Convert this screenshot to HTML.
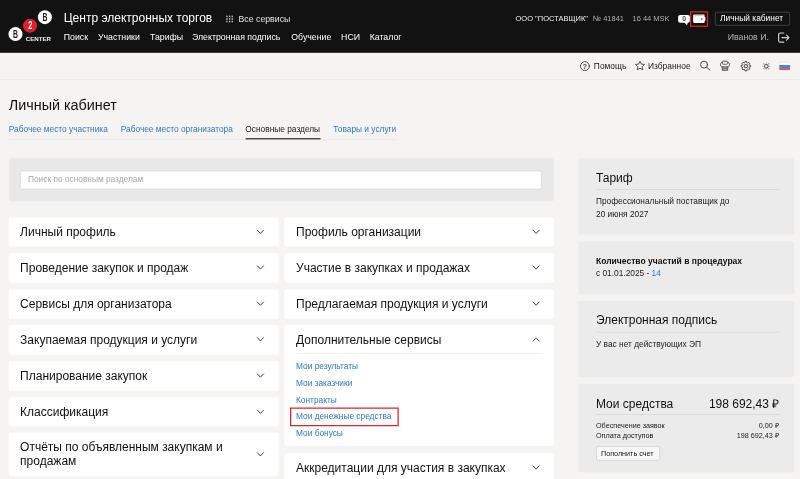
<!DOCTYPE html>
<html lang="ru">
<head>
<meta charset="utf-8">
<title>Личный кабинет</title>
<style>
*{box-sizing:border-box;margin:0;padding:0}
html,body{width:800px;height:479px;overflow:hidden;background:#f5f4f2}
body{font-family:"Liberation Sans",sans-serif;color:#1a1a1a}
#pg{position:absolute;left:-20px;top:-20px;width:1344px;height:840px;transform:scale(0.625);transform-origin:0 0;filter:blur(0.4px);background:#f5f4f2;overflow:hidden}
#in{position:absolute;left:32px;top:32px;width:1280px;height:767px}
.t{position:absolute;white-space:nowrap;line-height:20px}
.r{position:absolute}
svg{position:absolute;overflow:visible}
</style>
</head>
<body>
<div id="pg"><div id="in">
<div class="r" style="left:-30.00px;top:-30.00px;width:1340.00px;height:114.00px;background:#121212;border-bottom:1.5px solid #000;"></div>
<svg style="left:0;top:0" width="100" height="84" viewBox="0 0 100 84">
<circle cx="71.8" cy="27.4" r="11.2" fill="#fff"/>
<circle cx="48.1" cy="41.3" r="11.2" fill="#e21e2d"/>
<circle cx="24.8" cy="54.6" r="11.2" fill="#fff"/>
<text transform="translate(71.8 33.1) scale(0.64 1)" font-family="Liberation Sans" font-weight="bold" font-size="17" text-anchor="middle" fill="#1a1a1a">B</text>
<text transform="translate(48.3 47) scale(0.7 1)" font-family="Liberation Sans" font-weight="bold" font-size="16.600" text-anchor="middle" fill="#fff">2</text>
<text transform="translate(24.8 60.3) scale(0.64 1)" font-family="Liberation Sans" font-weight="bold" font-size="17" text-anchor="middle" fill="#1a1a1a">B</text>
<text x="41.2" y="64.8" font-family="Liberation Sans" font-weight="bold" font-size="9.4" fill="#f2f2f2" textLength="40.4" lengthAdjust="spacingAndGlyphs">CENTER</text>
</svg>
<div class="t" style="top:19.35px;font-size:19.2px;color:#fff;left:102.00px;">Центр электронных торгов</div>
<svg style="left:362.2px;top:24.6px" width="11" height="11" viewBox="0 0 11 11"><rect x="0.00" y="0.00" width="2.2" height="2.600" fill="#b8b8b8"/><rect x="4.25" y="0.00" width="2.2" height="2.600" fill="#b8b8b8"/><rect x="8.50" y="0.00" width="2.2" height="2.600" fill="#b8b8b8"/><rect x="0.00" y="4.10" width="2.2" height="2.600" fill="#b8b8b8"/><rect x="4.25" y="4.10" width="2.2" height="2.600" fill="#b8b8b8"/><rect x="8.50" y="4.10" width="2.2" height="2.600" fill="#b8b8b8"/><rect x="0.00" y="8.20" width="2.2" height="2.600" fill="#b8b8b8"/><rect x="4.25" y="8.20" width="2.2" height="2.600" fill="#b8b8b8"/><rect x="8.50" y="8.20" width="2.2" height="2.600" fill="#b8b8b8"/></svg>
<div class="t" style="top:20.35px;font-size:14px;color:#e4e4e4;left:381.60px;">Все сервисы</div>
<div class="t" style="top:48.75px;font-size:14px;color:#fff;left:102.00px;">Поиск</div>
<div class="t" style="top:48.75px;font-size:14px;color:#fff;left:156.80px;">Участники</div>
<div class="t" style="top:48.75px;font-size:14px;color:#fff;left:240.00px;">Тарифы</div>
<div class="t" style="top:48.75px;font-size:14px;color:#fff;left:307.20px;">Электронная подпись</div>
<div class="t" style="top:48.75px;font-size:14px;color:#fff;left:466.00px;">Обучение</div>
<div class="t" style="top:48.75px;font-size:14px;color:#fff;left:545.80px;">НСИ</div>
<div class="t" style="top:48.75px;font-size:14px;color:#fff;left:591.50px;">Каталог</div>
<div class="t" style="top:19.84px;font-size:12px;color:#f0f0f0;left:824.80px;">ООО "ПОСТАВЩИК"</div>
<div class="t" style="top:19.84px;font-size:12px;color:#b0b0b0;left:948.80px;">№ 41841</div>
<div class="t" style="top:19.84px;font-size:12px;color:#b0b0b0;left:1012.00px;">16 44 MSK</div>
<svg style="left:1085.2px;top:23.6px" width="20" height="17" viewBox="0 0 20 17">
<path d="M3.200 0H15.600a3.200 3.200 0 0 1 3.200 3.200V9.200a3.200 3.200 0 0 1-3.200 3.200H15.300L14.200 16.400L10.200 12.400H3.200a3.200 3.200 0 0 1-3.200-3.200V3.200a3.200 3.200 0 0 1 3.200-3.200z" fill="#fff"/>
<text x="9.600" y="10.100" font-family="Liberation Sans" font-weight="bold" font-size="11" text-anchor="middle" fill="#4a4a4a">0</text>
</svg>
<div class="r" style="left:1104.4px;top:17.6px;width:28.8px;height:25.2px;border:2.4px solid #e0212f"></div>
<svg style="left:1108.8px;top:23.2px" width="20" height="14" viewBox="0 0 20 14">
<path d="M1.800 0H16.800a1.600 1.600 0 0 1 1.600 1.600V4.200H19.600V10H18.400V12a1.600 1.600 0 0 1-1.600 1.600H1.800a1.800 1.800 0 0 1-1.800-1.800V1.800a1.800 1.800 0 0 1 1.800-1.800z" fill="#fff"/>
<path d="M1.600 1.800H16.600" stroke="#999" stroke-width="0.800"/>
<circle cx="14" cy="7.300" r="1.300" fill="#222"/>
</svg>
<div class="r" style="left:1143.5px;top:19.2px;width:120.3px;height:22.1px;border:1.2px solid #5c5c5c;border-radius:3px"></div>
<div class="t" style="top:20.14px;font-size:13.44px;color:#fff;left:1152.00px;">Личный кабинет</div>
<div class="t" style="top:49.35px;font-size:14px;color:#b4b4b4;left:1164.30px;">Иванов И.</div>
<svg style="left:1244.8px;top:52.200px" width="19" height="17" viewBox="0 0 19 17" fill="none" stroke="#d2d2d2" stroke-width="1.800" stroke-linecap="round" stroke-linejoin="round">
<path d="M9 0.800H3.600A2.800 2.800 0 0 0 0.800 3.600V12.600A2.800 2.800 0 0 0 3.600 15.400H9"/>
<path d="M6 8.100H17.400M13.400 4.100L17.400 8.100L13.400 12.100"/>
</svg>
<div class="r" style="left:-30.00px;top:127.00px;width:1340.00px;height:1.00px;background:#e6e5e3;"></div>
<svg style="left:928.2px;top:98.2px" width="16" height="16" viewBox="0 0 16 16" fill="none" stroke="#3a3a3a" stroke-width="1.400" stroke-linecap="round">
<circle cx="7.800" cy="7.800" r="7.100"/>
<text x="7.800" y="11.700" font-family="Liberation Sans" font-weight="bold" font-size="11" text-anchor="middle" fill="#3a3a3a" stroke="none">?</text>
</svg>
<div class="t" style="top:96.74px;font-size:13.44px;color:#1a1a1a;left:950.20px;">Помощь</div>
<svg style="left:1016.2px;top:97px" width="16" height="16" viewBox="0 0 16 16" fill="none" stroke="#3a3a3a" stroke-width="1.400" stroke-linejoin="round">
<path d="M8 0.900L10.200 5.500L15.200 6.100L11.500 9.600L12.500 14.600L8 12.100L3.500 14.600L4.500 9.600L0.800 6.100L5.800 5.500Z"/>
</svg>
<div class="t" style="top:96.74px;font-size:13.44px;color:#1a1a1a;left:1036.80px;">Избранное</div>
<svg style="left:1119.6px;top:97.400px" width="17" height="17" viewBox="0 0 17 17" fill="none" stroke="#3a3a3a" stroke-width="1.500" stroke-linecap="round">
<circle cx="6.500" cy="6.400" r="5.600"/><path d="M10.700 10.600L15.900 15.200"/>
</svg>
<svg style="left:1152px;top:97.400px" width="17" height="17" viewBox="0 0 17 17" fill="none" stroke="#3a3a3a" stroke-width="1.400" stroke-linejoin="round">
<path d="M3.200 9.800C1.600 9.800 0.800 8.400 0.800 6.400C0.800 4 2 2.900 3.900 2.800V2.300C3.900 1.200 4.700 0.800 5.600 0.800H10.400C11.300 0.800 12.100 1.200 12.100 2.300V2.800C14 2.900 15.200 4 15.200 6.400C15.200 8.400 14.400 9.800 12.800 9.800Z"/>
<path d="M3.900 2.800V4.600C3.900 5.400 4.400 5.800 5.200 5.800H10.800C11.600 5.800 12.100 5.400 12.100 4.600V2.800" stroke-width="1.200"/>
<path d="M3.600 9.800V15.500H12.400V9.800" stroke-width="1.300"/>
<path d="M3.600 12.600H12.400M5.800 10.200V15.500M8 10.200V15.500M10.200 10.200V15.500" stroke-width="1" stroke="#555"/>
</svg>
<svg style="left:1184.8px;top:97.800px" width="17" height="16" viewBox="0 0 17 16" fill="none" stroke="#3a3a3a" stroke-width="1.400" stroke-linejoin="round">
<path d="M7.00 0.21L9.60 0.21L9.71 2.28L11.21 2.90L12.75 1.51L14.59 3.35L13.20 4.89L13.82 6.39L15.89 6.50L15.89 9.10L13.82 9.21L13.20 10.71L14.59 12.25L12.75 14.09L11.21 12.70L9.71 13.32L9.60 15.39L7.00 15.39L6.89 13.32L5.39 12.70L3.85 14.09L2.01 12.25L3.40 10.71L2.78 9.21L0.71 9.10L0.71 6.50L2.78 6.39L3.40 4.89L2.01 3.35L3.85 1.51L5.39 2.90L6.89 2.28Z"/>
<circle cx="8.3" cy="7.8" r="2.700" stroke-width="1.600"/>
</svg>
<svg style="left:1219.5px;top:99.500px" width="13" height="13" viewBox="0 0 13 13" fill="none">
<circle cx="6.100" cy="6.100" r="2.900" stroke="#555" stroke-width="1.700"/><path d="M10.70 6.10L12.10 6.10M6.10 10.70L6.10 12.10M1.50 6.10L0.10 6.10M6.10 1.50L6.10 0.10" stroke="#a9a9a9" stroke-width="2"/><circle cx="10.06" cy="10.06" r="0.95" fill="#666" stroke="none"/><circle cx="2.14" cy="10.06" r="0.95" fill="#666" stroke="none"/><circle cx="2.14" cy="2.14" r="0.95" fill="#666" stroke="none"/><circle cx="10.06" cy="2.14" r="0.95" fill="#666" stroke="none"/>
</svg>
<div class="r" style="left:1246.5px;top:100.4px;width:17.5px;height:11.3px;border-radius:1px;overflow:hidden;box-shadow:0 0 1.5px rgba(0,0,0,.18);background:linear-gradient(#fff 0 31%,#3d89e6 31% 67%,#f24e58 67% 100%)"></div>
<div class="t" style="top:158.03px;font-size:23px;color:#111;left:14.00px;">Личный кабинет</div>
<div class="t" style="top:197.48px;font-size:13.33px;color:#2e7bbe;left:14.00px;">Рабочее место участника</div>
<div class="t" style="top:197.48px;font-size:13.33px;color:#2e7bbe;left:193.20px;">Рабочее место организатора</div>
<div class="t" style="top:197.48px;font-size:13.33px;color:#1a1a1a;left:392.60px;">Основные разделы</div>
<div class="t" style="top:197.48px;font-size:13.33px;color:#2e7bbe;left:533.40px;">Товары и услуги</div>
<div class="r" style="left:14.00px;top:222.60px;width:619.30px;height:1.00px;background:#e4e3e1;"></div>
<div class="r" style="left:392.60px;top:221.00px;width:120.40px;height:2.40px;background:#333;"></div>
<div class="r" style="left:14.00px;top:253.20px;width:872.20px;height:68.80px;background:#e8e8e8;border-radius:4px;"></div>
<div class="r" style="left:32px;top:272.8px;width:834.8px;height:30.4px;background:#fff;border:1px solid #cfcfcf;border-radius:3px"></div>
<div class="t" style="top:277.38px;font-size:13.33px;color:#a8a8a8;left:44.80px;">Поиск по основным разделам</div>
<div class="r" style="left:14.00px;top:347.60px;width:431.60px;height:46.80px;background:#fff;border-radius:4px;"></div>
<div class="t" style="top:361.25px;font-size:19.2px;color:#111;left:32.20px;">Личный профиль</div>
<svg style="left:410.90px;top:366.60px" width="12" height="8" viewBox="0 0 12 8" fill="none" stroke="#383838" stroke-width="1.500" stroke-linecap="round" stroke-linejoin="round"><path d="M0.8 1.300L5.700 6.500L10.600 1.300"/></svg>
<div class="r" style="left:14.00px;top:405.20px;width:431.60px;height:46.80px;background:#fff;border-radius:4px;"></div>
<div class="t" style="top:418.85px;font-size:19.2px;color:#111;left:32.20px;">Проведение закупок и продаж</div>
<svg style="left:410.90px;top:424.20px" width="12" height="8" viewBox="0 0 12 8" fill="none" stroke="#383838" stroke-width="1.500" stroke-linecap="round" stroke-linejoin="round"><path d="M0.8 1.300L5.700 6.500L10.600 1.300"/></svg>
<div class="r" style="left:14.00px;top:462.80px;width:431.60px;height:46.80px;background:#fff;border-radius:4px;"></div>
<div class="t" style="top:476.45px;font-size:19.2px;color:#111;left:32.20px;">Сервисы для организатора</div>
<svg style="left:410.90px;top:481.80px" width="12" height="8" viewBox="0 0 12 8" fill="none" stroke="#383838" stroke-width="1.500" stroke-linecap="round" stroke-linejoin="round"><path d="M0.8 1.300L5.700 6.500L10.600 1.300"/></svg>
<div class="r" style="left:14.00px;top:520.40px;width:431.60px;height:46.80px;background:#fff;border-radius:4px;"></div>
<div class="t" style="top:534.05px;font-size:19.2px;color:#111;left:32.20px;">Закупаемая продукция и услуги</div>
<svg style="left:410.90px;top:539.40px" width="12" height="8" viewBox="0 0 12 8" fill="none" stroke="#383838" stroke-width="1.500" stroke-linecap="round" stroke-linejoin="round"><path d="M0.8 1.300L5.700 6.500L10.600 1.300"/></svg>
<div class="r" style="left:14.00px;top:578.00px;width:431.60px;height:46.80px;background:#fff;border-radius:4px;"></div>
<div class="t" style="top:591.65px;font-size:19.2px;color:#111;left:32.20px;">Планирование закупок</div>
<svg style="left:410.90px;top:597.00px" width="12" height="8" viewBox="0 0 12 8" fill="none" stroke="#383838" stroke-width="1.500" stroke-linecap="round" stroke-linejoin="round"><path d="M0.8 1.300L5.700 6.500L10.600 1.300"/></svg>
<div class="r" style="left:14.00px;top:635.60px;width:431.60px;height:46.80px;background:#fff;border-radius:4px;"></div>
<div class="t" style="top:649.25px;font-size:19.2px;color:#111;left:32.20px;">Классификация</div>
<svg style="left:410.90px;top:654.60px" width="12" height="8" viewBox="0 0 12 8" fill="none" stroke="#383838" stroke-width="1.500" stroke-linecap="round" stroke-linejoin="round"><path d="M0.8 1.300L5.700 6.500L10.600 1.300"/></svg>
<div class="r" style="left:14.00px;top:692.40px;width:431.60px;height:69.20px;background:#fff;border-radius:4px;"></div>
<div class="t" style="top:706.05px;font-size:19.2px;color:#111;left:32.20px;">Отчёты по объявленным закупкам и</div>
<div class="t" style="top:728.15px;font-size:19.2px;color:#111;left:32.20px;">продажам</div>
<svg style="left:410.90px;top:722.80px" width="12" height="8" viewBox="0 0 12 8" fill="none" stroke="#383838" stroke-width="1.500" stroke-linecap="round" stroke-linejoin="round"><path d="M0.8 1.300L5.700 6.500L10.600 1.300"/></svg>
<div class="r" style="left:454.70px;top:347.60px;width:431.50px;height:46.80px;background:#fff;border-radius:4px;"></div>
<div class="t" style="top:361.25px;font-size:19.2px;color:#111;left:473.70px;">Профиль организации</div>
<svg style="left:851.50px;top:366.60px" width="12" height="8" viewBox="0 0 12 8" fill="none" stroke="#383838" stroke-width="1.500" stroke-linecap="round" stroke-linejoin="round"><path d="M0.8 1.300L5.700 6.500L10.600 1.300"/></svg>
<div class="r" style="left:454.70px;top:405.20px;width:431.50px;height:46.80px;background:#fff;border-radius:4px;"></div>
<div class="t" style="top:418.85px;font-size:19.2px;color:#111;left:473.70px;">Участие в закупках и продажах</div>
<svg style="left:851.50px;top:424.20px" width="12" height="8" viewBox="0 0 12 8" fill="none" stroke="#383838" stroke-width="1.500" stroke-linecap="round" stroke-linejoin="round"><path d="M0.8 1.300L5.700 6.500L10.600 1.300"/></svg>
<div class="r" style="left:454.70px;top:462.80px;width:431.50px;height:46.80px;background:#fff;border-radius:4px;"></div>
<div class="t" style="top:476.45px;font-size:19.2px;color:#111;left:473.70px;">Предлагаемая продукция и услуги</div>
<svg style="left:851.50px;top:481.80px" width="12" height="8" viewBox="0 0 12 8" fill="none" stroke="#383838" stroke-width="1.500" stroke-linecap="round" stroke-linejoin="round"><path d="M0.8 1.300L5.700 6.500L10.600 1.300"/></svg>
<div class="r" style="left:454.70px;top:520.40px;width:431.50px;height:192.60px;background:#fff;border-radius:4px;"></div>
<div class="t" style="top:533.55px;font-size:19.2px;color:#111;left:473.70px;">Дополнительные сервисы</div>
<svg style="left:851.50px;top:539.40px" width="12" height="8" viewBox="0 0 12 8" fill="none" stroke="#383838" stroke-width="1.500" stroke-linecap="round" stroke-linejoin="round"><path d="M0.8 6.700L5.700 1.500L10.600 6.700"/></svg>
<div class="r" style="left:473.60px;top:564.90px;width:393.30px;height:1.00px;background:#ebebeb;"></div>
<div class="t" style="top:577.28px;font-size:13.33px;color:#2e7bbe;left:473.60px;">Мои результаты</div>
<div class="t" style="top:603.98px;font-size:13.33px;color:#2e7bbe;left:473.60px;">Мои заказчики</div>
<div class="t" style="top:630.68px;font-size:13.33px;color:#2e7bbe;left:473.60px;">Контракты</div>
<div class="t" style="top:657.38px;font-size:13.33px;color:#2e7bbe;left:473.60px;">Мои денежные средства</div>
<div class="t" style="top:684.08px;font-size:13.33px;color:#2e7bbe;left:473.60px;">Мои бонусы</div>
<div class="r" style="left:464.2px;top:652.2px;width:173.8px;height:29.8px;border:2.3px solid #e0222f"></div>
<div class="r" style="left:454.70px;top:725.40px;width:431.50px;height:46.80px;background:#fff;border-radius:4px;"></div>
<div class="t" style="top:738.55px;font-size:19.2px;color:#111;left:473.70px;">Аккредитации для участия в закупках</div>
<svg style="left:851.50px;top:744.40px" width="12" height="8" viewBox="0 0 12 8" fill="none" stroke="#383838" stroke-width="1.500" stroke-linecap="round" stroke-linejoin="round"><path d="M0.8 1.300L5.700 6.500L10.600 1.300"/></svg>
<div class="r" style="left:925.30px;top:253.40px;width:345.30px;height:121.60px;background:#ebebeb;border-radius:4px;"></div>
<div class="t" style="top:274.55px;font-size:19.2px;color:#111;left:953.60px;">Тариф</div>
<div class="r" style="left:953.60px;top:302.80px;width:293.00px;height:1.00px;background:#d3d3d3;"></div>
<div class="t" style="top:312.58px;font-size:13.33px;color:#1c1c1c;left:953.60px;">Профессиональный поставщик до</div>
<div class="t" style="top:332.78px;font-size:13.33px;color:#1c1c1c;left:953.60px;">20 июня 2027</div>
<div class="r" style="left:925.30px;top:386.40px;width:345.30px;height:84.30px;background:#ebebeb;border-radius:4px;"></div>
<div class="t" style="top:408.78px;font-size:13.63px;color:#111;left:953.60px;font-weight:bold;">Количество участий в процедурах</div>
<div class="t" style="top:427.98px;font-size:13.33px;color:#1c1c1c;left:953.60px;">с 01.01.2025 - <span style="color:#2e7bbe">14</span></div>
<div class="r" style="left:925.30px;top:481.10px;width:345.30px;height:122.40px;background:#ebebeb;border-radius:4px;"></div>
<div class="t" style="top:502.85px;font-size:19.2px;color:#111;left:953.60px;">Электронная подпись</div>
<div class="r" style="left:953.60px;top:531.00px;width:293.00px;height:1.00px;background:#d3d3d3;"></div>
<div class="t" style="top:541.48px;font-size:13.33px;color:#1c1c1c;left:953.60px;">У вас нет действующих ЭП</div>
<div class="r" style="left:925.30px;top:613.60px;width:345.30px;height:142.60px;background:#ebebeb;border-radius:4px;"></div>
<div class="t" style="top:636.15px;font-size:19.2px;color:#111;left:953.60px;">Мои средства</div>
<div class="t" style="top:636.15px;font-size:19.2px;color:#111;right:33.40px;">198 692,43 ₽</div>
<div class="r" style="left:953.60px;top:663.00px;width:293.00px;height:1.00px;background:#d3d3d3;"></div>
<div class="t" style="top:670.31px;font-size:11.52px;color:#1a1a1a;left:953.60px;">Обеспечение заявок</div>
<div class="t" style="top:686.61px;font-size:11.52px;color:#1a1a1a;left:953.60px;">Оплата доступов</div>
<div class="t" style="top:670.31px;font-size:11.52px;color:#1a1a1a;right:33.40px;">0,00 ₽</div>
<div class="t" style="top:686.61px;font-size:11.52px;color:#1a1a1a;right:33.40px;">198 692,43 ₽</div>
<div class="r" style="left:953.6px;top:713.6px;width:102.4px;height:23.7px;background:#f7f7f7;border:1px solid #c9c9c9;border-radius:3px"></div>
<div class="t" style="top:715.11px;font-size:11.52px;color:#1a1a1a;left:961.60px;">Пополнить счет</div>
</div></div>
</body>
</html>
